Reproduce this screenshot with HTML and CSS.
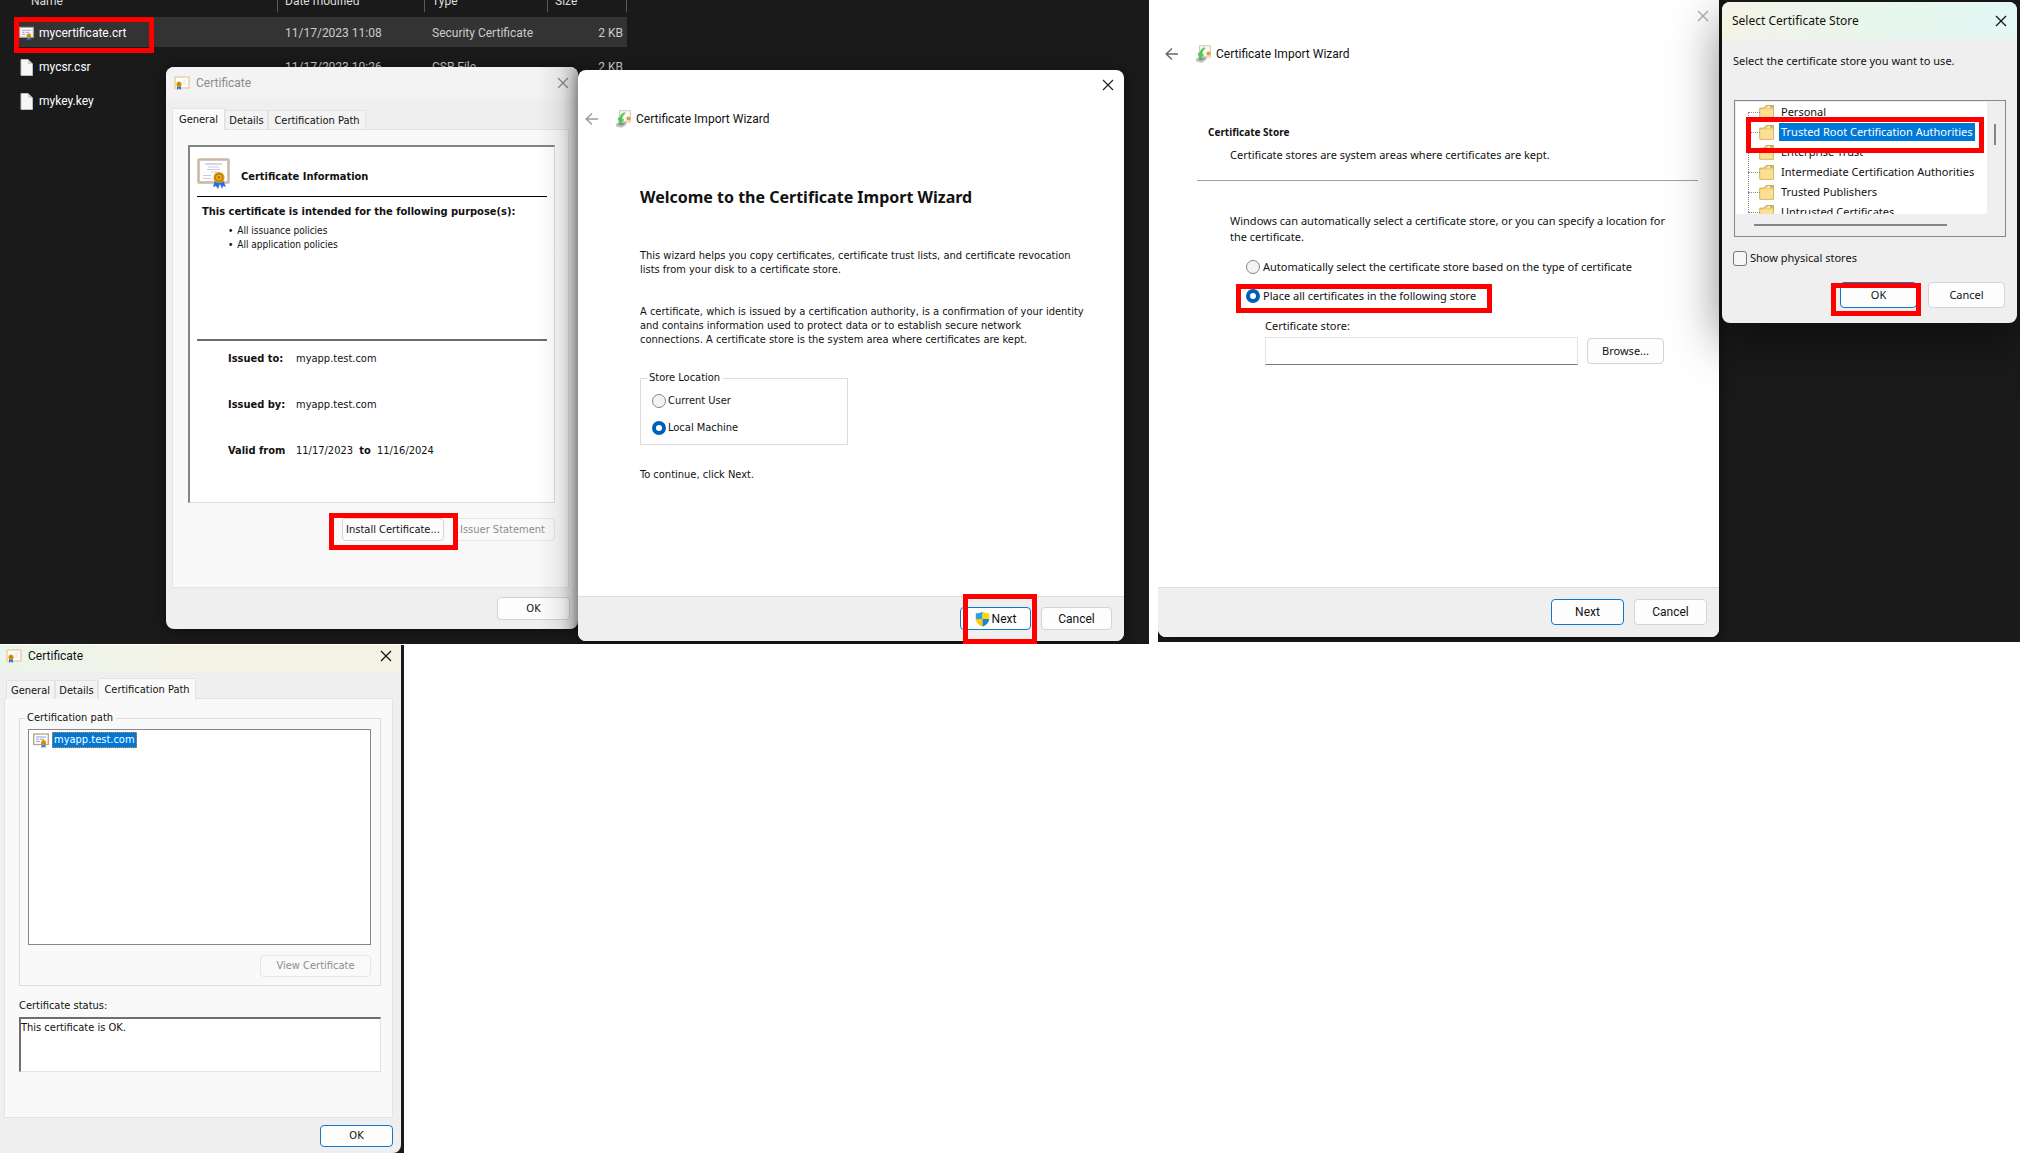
FILE: index.html
```html
<!DOCTYPE html>
<html lang="en">
<head>
<meta charset="utf-8">
<title>Install a self-signed certificate</title>
<link rel="stylesheet" href="styles.css">
</head>
<body>
<svg class="defs" aria-hidden="true">
  <symbol id="cert" viewBox="0 0 16 14">
    <rect x="1" y="1" width="14" height="11" fill="#fff" stroke="#ecd2a8" stroke-width="1.6"/>
    <path d="M8 4h5M8 6h4M9 8h4" stroke="#e3e3ee" stroke-width="1"/>
    <path d="M3 9v5l2-1.500 2 1.500V9z" fill="#2f74e8"/>
    <circle cx="5" cy="8.200" r="2.600" fill="#d99a10"/>
    <circle cx="5" cy="8" r="1.100" fill="#b87a00"/>
  </symbol>
  <symbol id="cert-list" viewBox="0 0 16 15">
    <rect x=".7" y="1" width="14.600" height="10.500" fill="#fff" stroke="#b5a187" stroke-width="1.300"/>
    <path d="M3 4h10M3 6.200h3M7 6.200h4M3 8.400h4" stroke="#8f9bd8" stroke-width="1"/>
    <path d="M8.500 10v5l2-1.300 2 1.300v-5z" fill="#2f74e8"/>
    <circle cx="10.500" cy="9.700" r="2.600" fill="#dc9c0c"/>
    <circle cx="10.500" cy="9.700" r="1" fill="#b87a00"/>
  </symbol>
  <symbol id="cert-big" viewBox="0 0 34 31">
    <rect x="1.500" y="1.500" width="30" height="23" rx="1" fill="#fff" stroke="#d6c8b4" stroke-width="3"/>
    <rect x="1.500" y="1.500" width="30" height="23" rx="1" fill="none" stroke="#b9a88f" stroke-width="1" stroke-dasharray="1 1"/>
    <path d="M8 6h17" stroke="#a9b0d8"/>
    <path d="M11 9h11M10 11.500h13M14 14h6M6 17.500h8M6 20.500h8" stroke="#ccd" stroke-width="1"/>
    <path d="M18 22l-2 7 3-1 2 3 2-5 2 5 1-3 3 1-3-7z" fill="#2a6ee6"/>
    <circle cx="22" cy="19.500" r="5.500" fill="#dc9a0a"/>
    <circle cx="22" cy="19.500" r="3.600" fill="#e9b22f" stroke="#a97300"/>
    <circle cx="22" cy="19.500" r="1.400" fill="#b87a00"/>
  </symbol>
  <symbol id="doc" viewBox="0 0 13 17">
    <path d="M1 .5h7l4.500 4.500v11.500H1z" fill="#f6f6f6" stroke="#bdbdbd"/>
    <path d="M8 .5V5h4.500z" fill="#cfcfcf"/>
  </symbol>
  <symbol id="import" viewBox="0 0 17 18">
    <rect x="4.500" y=".7" width="11" height="11" fill="#faf7f0" stroke="#d8cbb4"/>
    <path d="M11 8v6l2-1.500 2 1.500V8z" fill="#f0e6d0"/>
    <circle cx="13.500" cy="8.500" r="2" fill="#e0a02a"/>
    <path d="M.5 14.500L4 11.500h8.500l-1.500 3.500-4 2.700-5-.8z" fill="#c3c7c3"/>
    <path d="M2.500 14.300l3-1.500h5l-2 2.200-3 .8z" fill="#8f958f"/>
    <path d="M9.500 2.500C6.500 3.500 4.800 6 4.600 8.500L2.800 8l2 5.500L9 9.800l-2-.5C7 7 7.800 5 10 3.500z" fill="#44cf4e" stroke="#35b544" stroke-width=".4"/>
  </symbol>
  <symbol id="close" viewBox="0 0 12 12">
    <path d="M1 1l10 10M11 1L1 11" fill="none" stroke="currentColor" stroke-width="1.200"/>
  </symbol>
  <symbol id="back" viewBox="0 0 14 14">
    <path d="M13 7H1M7 1.500L1.200 7 7 12.500" fill="none" stroke="currentColor" stroke-width="1.400"/>
  </symbol>
  <symbol id="shield" viewBox="0 0 15 16">
    <path d="M7.500.5C5.500 2 3 2.300.8 2.300V8h6.700z" fill="#2ba0ea"/>
    <path d="M7.500.5C9.500 2 12 2.300 14.200 2.300V8H7.500z" fill="#ffd400"/>
    <path d="M.8 8c.3 3.500 3 6.300 6.700 7.700V8z" fill="#ffc800"/>
    <path d="M14.200 8c-.3 3.500-3 6.300-6.700 7.700V8z" fill="#1683d8"/>
  </symbol>
  <symbol id="folder" viewBox="0 0 16 16">
    <path d="M.8 4.200h4L7 1.500h7.500v13.700H.8z" fill="#edcf7c" stroke="#d2a944"/>
    <path d="M8.500 3h3" stroke="#fff" stroke-width="1.200"/>
    <path d="M11.500 3h1.800" stroke="#3b8ad8" stroke-width="1.200"/>
    <path d="M1.300 5.500h13v9.200h-13z" fill="#fbdf94"/>
  </symbol>
</svg>

<main class="board">
  <section class="desk desk-files">
    <table class="files">
      <colgroup><col class="c-name"><col class="c-date"><col class="c-type"><col class="c-size"></colgroup>
      <thead><tr><th>Name</th><th>Date modified</th><th>Type</th><th>Size</th></tr></thead>
      <tbody>
        <tr class="picked"><td><span class="file"><svg width="15" height="15"><use href="#cert-list"/></svg>mycertificate.crt</span></td><td>11/17/2023 11:08</td><td>Security Certificate</td><td>2 KB</td></tr>
        <tr><td><span class="file"><svg width="15" height="17"><use href="#doc"/></svg>mycsr.csr</span></td><td>11/17/2023 10:26</td><td>CSR File</td><td>2 KB</td></tr>
        <tr><td><span class="file"><svg width="15" height="17"><use href="#doc"/></svg>mykey.key</span></td><td></td><td></td><td></td></tr>
      </tbody>
    </table>

    <article class="win cert cert-general">
      <header class="bar"><svg width="16" height="14"><use href="#cert"/></svg><h2>Certificate</h2><button class="x" aria-label="Close"><svg width="12" height="12"><use href="#close"/></svg></button></header>
      <nav class="tabs"><button class="tab on">General</button><button class="tab">Details</button><button class="tab">Certification Path</button></nav>
      <div class="page">
        <div class="info">
          <div class="info-head"><svg width="34" height="31"><use href="#cert-big"/></svg><h3>Certificate Information</h3></div>
          <h4>This certificate is intended for the following purpose(s):</h4>
          <ul><li>All issuance policies</li><li>All application policies</li></ul>
          <dl>
            <div><dt>Issued to:</dt><dd>myapp.test.com</dd></div>
            <div><dt>Issued by:</dt><dd>myapp.test.com</dd></div>
            <div><dt>Valid from</dt><dd>11/17/2023 <b>to</b> 11/16/2024</dd></div>
          </dl>
        </div>
        <div class="actions"><button class="btn install">Install Certificate...</button><button class="btn issuer" disabled>Issuer Statement</button></div>
      </div>
      <footer><button class="btn">OK</button></footer>
    </article>

    <article class="win wizard wizard-welcome">
      <button class="x" aria-label="Close"><svg width="12" height="12"><use href="#close"/></svg></button>
      <header class="wtitle"><button class="back" aria-label="Back"><svg width="14" height="14"><use href="#back"/></svg></button><svg width="17" height="18"><use href="#import"/></svg><h2>Certificate Import Wizard</h2></header>
      <div class="wbody">
        <h1>Welcome to the Certificate Import Wizard</h1>
        <p>This wizard helps you copy certificates, certificate trust lists, and certificate revocation<br>lists from your disk to a certificate store.</p>
        <p>A certificate, which is issued by a certification authority, is a confirmation of your identity<br>and contains information used to protect data or to establish secure network<br>connections. A certificate store is the system area where certificates are kept.</p>
        <fieldset><legend>Store Location</legend>
          <label><input type="radio" name="loc">Current User</label>
          <label><input type="radio" name="loc" checked>Local Machine</label>
        </fieldset>
        <p>To continue, click Next.</p>
      </div>
      <footer><button class="btn main"><svg width="15" height="16"><use href="#shield"/></svg>Next</button><button class="btn">Cancel</button></footer>
    </article>
    <span class="mark mark-file"></span>
    <span class="mark mark-install"></span>
    <span class="mark mark-next"></span>
  </section>

  <section class="desk desk-store">
    <article class="win wizard wizard-store">
      <button class="x" aria-label="Close"><svg width="12" height="12"><use href="#close"/></svg></button>
      <header class="wtitle"><button class="back" aria-label="Back"><svg width="14" height="14"><use href="#back"/></svg></button><svg width="17" height="18"><use href="#import"/></svg><h2>Certificate Import Wizard</h2></header>
      <div class="wbody">
        <h3>Certificate Store</h3>
        <p class="desc">Certificate stores are system areas where certificates are kept.</p>
        <hr>
        <p class="lead">Windows can automatically select a certificate store, or you can specify a location for<br>the certificate.</p>
        <label class="opt"><input type="radio" name="store">Automatically select the certificate store based on the type of certificate</label>
        <label class="opt"><input type="radio" name="store" checked>Place all certificates in the following store</label>
        <div class="pick"><label for="store-name">Certificate store:</label>
          <div class="pick-row"><input id="store-name" type="text"><button class="btn">Browse...</button></div></div>
      </div>
      <footer><button class="btn main">Next</button><button class="btn">Cancel</button></footer>
    </article>

    <article class="win select">
      <header class="bar"><h2>Select Certificate Store</h2><button class="x" aria-label="Close"><svg width="12" height="12"><use href="#close"/></svg></button></header>
      <div class="sbody">
        <p>Select the certificate store you want to use.</p>
        <div class="tree">
          <ul>
            <li><svg width="16" height="16"><use href="#folder"/></svg><span>Personal</span></li>
            <li class="sel"><svg width="16" height="16"><use href="#folder"/></svg><span>Trusted Root Certification Authorities</span></li>
            <li><svg width="16" height="16"><use href="#folder"/></svg><span>Enterprise Trust</span></li>
            <li><svg width="16" height="16"><use href="#folder"/></svg><span>Intermediate Certification Authorities</span></li>
            <li><svg width="16" height="16"><use href="#folder"/></svg><span>Trusted Publishers</span></li>
            <li><svg width="16" height="16"><use href="#folder"/></svg><span>Untrusted Certificates</span></li>
          </ul>
          <i class="vthumb"></i><i class="hthumb"></i>
        </div>
        <label class="check"><input type="checkbox">Show physical stores</label>
        <div class="actions"><button class="btn main">OK</button><button class="btn">Cancel</button></div>
      </div>
    </article>
    <span class="mark mark-place"></span>
    <span class="mark mark-root"></span>
    <span class="mark mark-ok"></span>
  </section>

  <section class="desk desk-path">
    <article class="cert cert-path">
      <header class="bar"><svg width="16" height="14"><use href="#cert"/></svg><h2>Certificate</h2><button class="x" aria-label="Close"><svg width="12" height="12"><use href="#close"/></svg></button></header>
      <nav class="tabs"><button class="tab">General</button><button class="tab">Details</button><button class="tab on">Certification Path</button></nav>
      <div class="page">
        <fieldset><legend>Certification path</legend>
          <ul class="chain"><li><svg width="16" height="15"><use href="#cert-list"/></svg><span>myapp.test.com</span></li></ul>
          <div class="actions"><button class="btn" disabled>View Certificate</button></div>
        </fieldset>
        <label for="status">Certificate status:</label>
        <textarea id="status" readonly>This certificate is OK.</textarea>
      </div>
      <footer><button class="btn main">OK</button></footer>
    </article>
  </section>
</main>
</body>
</html>
```
FILE: styles.css
```css
* { box-sizing: border-box; }
body { margin: 0; background: #fff; color: #111; font: 11px/14px "Noto Sans", sans-serif; }
h1, h2, h3, h4, p, ul, dl, dd { margin: 0; padding: 0; font-size: inherit; font-weight: normal; }
ul { list-style: none; }
button, input, textarea { font: inherit; color: inherit; margin: 0; }
svg { flex: none; display: block; }
p { white-space: nowrap; }
.defs { position: absolute; width: 0; height: 0; }

/* the three desktops, two on the first row and one below */
.board { display: grid; grid-template-columns: 1149fr 862fr; column-gap: 9px; row-gap: 1px; padding-right: 4px; }
.desk { position: relative; overflow: hidden; background: #1a1a1a; }
.desk-files { min-height: 644px; }
.desk-store { min-height: 642px; align-self: start; }
.desk-path { width: 404px; padding-right: 3px; }

/* file list */
.files { width: 613px; margin: -14px 0 0 14px; table-layout: fixed; border-collapse: separate; border-spacing: 0 4px; color: #fff; font: 12px/16px Roboto, sans-serif; }
.c-name { width: 264px; }
.c-date { width: 147px; }
.c-type { width: 123px; }
.files th { height: 23px; padding: 0 0 0 7px; font-weight: normal; text-align: left; color: #ddd; border-right: 1px solid #5a5a5a; border-bottom: 2px solid #1a1a1a; }
.files th:first-child { padding-left: 17px; }
.files td { height: 30px; padding: 2px 0 0 7px; color: #ccc; }
.files td:first-child { padding-left: 5px; color: #fff; }
.files td:last-child { padding: 2px 4px 0 0; text-align: right; }
.picked { background: #333; }
.file { display: flex; align-items: center; gap: 5px; }

/* shared window parts */
.win { position: absolute; display: flex; flex-direction: column; overflow: hidden; border-radius: 8px; background: #efefef; box-shadow: 0 2px 14px rgba(0, 0, 0, .5); }
.bar { display: flex; align-items: center; font: 12px/16px Roboto, sans-serif; }
.bar h2 { flex: 1; }
.x, .back { display: block; padding: 0; border: 0; background: none; }
.btn { display: flex; align-items: center; justify-content: center; gap: 2px; width: 73px; height: 23px; padding: 0; border: 1px solid #d4d4d4; border-radius: 4px; background: #fdfdfd; white-space: nowrap; }
.btn.main { border: 1px solid #0f78cc; }
.btn:disabled { color: #8d8d8d; border-color: #e6e6e6; background: #fafafa; }
footer, .actions { display: flex; justify-content: flex-end; gap: 10px; }
input[type="radio"] { appearance: none; width: 14px; height: 14px; border: 1px solid #868686; border-radius: 50%; background: #f3f3f3; }
input[type="radio"]:checked { border: 4px solid #005fb8; background: #fff; }

/* certificate properties */
.cert { background: #efefef; font: 11px/14px "DejaVu Sans Condensed", "DejaVu Sans", sans-serif; }
.tabs { display: flex; align-items: flex-end; padding-left: 6px; }
.tab { height: 19px; padding: 2px 0 0; border: 1px solid #e3e3e3; border-bottom: 0; background: #f3f3f3; color: #111; text-align: center; white-space: nowrap; }
.tab.on { height: 22px; margin-bottom: -1px; padding-bottom: 2px; background: #f9f9f9; z-index: 1; }
.page { border: 1px solid #e3e3e3; background: #f9f9f9; }
.cert-general { left: 166px; top: 67px; width: 412px; height: 562px; background-color: #efefef; }
.cert-general::after { content: ""; position: absolute; inset: 0 0 0 auto; width: 40px; background: linear-gradient(to right, transparent, rgba(0, 0, 0, .06) 50%, rgba(0, 0, 0, .22)); }
.cert-general .bar { height: 32px; padding: 0 9px 0 8px; gap: 6px; background: #f3f3f3; color: #8c8c8c; }
.cert-general .tabs { height: 30px; }
.cert-general .tab:nth-child(1) { width: 53px; }
.cert-general .tab:nth-child(2) { width: 43px; }
.cert-general .tab:nth-child(3) { width: 98px; }
.cert-general .page { height: 459px; margin: 0 9px 0 6px; padding: 15px 13px 0 15px; }
.info { height: 358px; padding: 10px 7px 0; border: 1px solid #ddd; border-top: 2px solid #848484; border-left: 2px solid #848484; background: #fff; }
.info-head { display: flex; align-items: center; gap: 10px; height: 40px; padding-bottom: 7px; border-bottom: 1px solid #000; }
.info h3, .info h4, dt, dd b { font-weight: bold; }
.info-head h3 { padding-top: 8px; }
.info h4 { padding: 8px 0 5px 5px; }
.info ul { height: 117px; padding-left: 31px; border-bottom: 2px solid #6c6c6c; font-size: 10px; }
.info li::before { content: "•"; margin-right: 4px; }
.info dl { display: grid; gap: 32px; padding: 11px 0 0 31px; }
.info dl div { display: flex; }
dt { width: 68px; }
dd b { margin: 0 3px; }
.page .actions { padding-top: 15px; gap: 10px; }
.btn.install { width: 102px; }
.btn.issuer { width: 101px; padding-right: 4px; }
.cert-general footer { padding: 9px 8px 0 0; }

/* import wizard */
.wizard { background: #fff; }
.wizard .x { position: absolute; color: #222; }
.wtitle { display: flex; align-items: center; font: 12px/16px Roboto, sans-serif; }
.wtitle h2 { padding-left: 4px; }
.back { margin-right: 16px; }
.wizard .wbody { flex: 1; }
.wizard footer { border-top: 1px solid #ddd; background: #efefef; }
.wizard-welcome { left: 578px; top: 70px; width: 546px; height: 571px; font: 11px/14px "DejaVu Sans Condensed", "DejaVu Sans", sans-serif; }
.wizard-welcome .x { right: 10px; top: 9px; }
.wizard-welcome .wtitle { padding: 40px 0 0 7px; }
.wizard-welcome .back { color: #9a9a9a; }
.wizard-welcome .wbody { padding: 58px 0 0 62px; }
.wizard-welcome h1 { padding-bottom: 41px; font: bold 16px/22px "Noto Sans", sans-serif; }
.wizard-welcome p { padding-bottom: 28px; }
.wizard-welcome fieldset { display: flex; flex-direction: column; gap: 13px; width: 208px; height: 74px; margin: -4px 0 23px; padding: 9px 0 0 11px; border: 1px solid #dcdcdc; }
.wizard-welcome legend { margin-left: -5px; padding: 0 3px 0 2px; }
.wizard-welcome label { display: flex; align-items: center; gap: 2px; }
.wizard-welcome footer { height: 45px; padding: 10px 12px 0 0; font: 12px/16px Roboto, sans-serif; }
.wizard-welcome .btn { width: 71px; }

.wizard-store { left: 0; top: -10px; width: 561px; height: 647px; }
.wizard-store .x { right: 10px; top: 20px; color: #aaa; }
.wizard-store .wtitle { padding: 55px 0 0 7px; }
.wizard-store .back { color: #666; }
.wizard-store .wbody { padding: 61px 0 0; line-height: 16px; }
.wizard-store h3 { padding-left: 50px; font-size: 10px; font-weight: bold; }
.desc { padding: 7px 0 0 72px; }
.wizard-store hr { height: 1px; margin: 17px 21px 0 39px; border: 0; background: #a0a0a0; }
.lead { padding: 32px 0 14px 72px; }
.opt { display: flex; align-items: center; gap: 3px; height: 16px; margin: 0 0 13px 88px; }
.pick { padding: 1px 0 0 107px; }
.pick-row { display: flex; align-items: center; gap: 9px; padding-top: 3px; }
.pick input { width: 313px; height: 28px; border: 1px solid #e3e3e3; border-bottom: 1px solid #777; background: #fff; }
.pick .btn { width: 77px; height: 26px; }
.wizard-store footer { height: 50px; padding: 11px 12px 0 0; font: 12px/16px Roboto, sans-serif; }
.wizard-store .btn { height: 26px; }

/* store picker */
.select { left: 564px; top: 2px; width: 295px; height: 321px; box-shadow: 0 18px 50px rgba(0, 0, 0, .5); }
.select .bar { height: 37px; padding: 0 10px; background: linear-gradient(to right, #f4f3e6, #e8f6ec 50%, #e3f7f4); font: 12px/16px "Noto Sans", sans-serif; }
.sbody { padding: 15px 12px 0 12px; }
.sbody p, .sbody .check { margin-left: -1px; }
.tree { position: relative; height: 137px; margin: 32px -1px 13px 0; padding: 1px; border: 1px solid #828790; background: #efefef; }
.tree ul { width: 251px; height: 112px; overflow: hidden; border-radius: 0 0 4px; background: #fff; }
.tree li { position: relative; display: flex; align-items: center; gap: 4px; height: 20px; padding-left: 23px; white-space: nowrap; }
.tree li span { padding: 2px; }
.tree li::before { content: ""; position: absolute; left: 12px; top: 10px; width: 12px; border-top: 1px dotted #888; }
.tree li:not(:first-child)::after { content: ""; position: absolute; left: 12px; top: -10px; height: 20px; border-left: 1px dotted #888; }
.tree .sel span { background: #0078d7; color: #fff; }
.vthumb { position: absolute; right: 9px; top: 23px; width: 2px; height: 21px; background: #858585; }
.hthumb { position: absolute; left: 19px; bottom: 10px; width: 193px; height: 2px; background: #858585; }
.check { display: flex; align-items: center; gap: 3px; height: 16px; }
.check input { appearance: none; width: 14px; height: 15px; border: 1px solid #777; border-radius: 3px; background: #f6f6f6; }
.select .actions { padding-top: 16px; gap: 11px; }
.select .btn { width: 77px; height: 26px; }

/* certification path */
.cert-path { border-radius: 0 0 8px; }
.cert-path .bar { height: 26px; padding: 0 9px 4px 6px; gap: 6px; background: linear-gradient(to right, #ecf5ea, #f5f3e6 50%); }
.cert-path .tabs { height: 28px; }
.cert-path .tab:nth-child(1) { width: 49px; }
.cert-path .tab:nth-child(2) { width: 43px; }
.cert-path .tab:nth-child(3) { width: 98px; }
.cert-path .page { height: 420px; margin: -1px 8px 0 4px; padding: 12px 11px 0 14px; }
.cert-path fieldset { height: 275px; margin: 0 0 13px; padding: 4px 9px 0 8px; border: 1px solid #dcdcdc; }
.cert-path legend { margin-left: -3px; padding: 0 3px 0 2px; }
.chain { height: 216px; padding: 2px 4px; border: 1px solid #828790; background: #fff; }
.chain li { display: flex; align-items: center; gap: 3px; }
.chain span { padding: 0 1px; border: 1px dotted #e08a2a; background: #0078d7; color: #fff; }
.cert-path .page .actions { padding-top: 10px; }
.cert-path .page .btn { width: 111px; height: 22px; }
.cert-path .page label { display: block; }
textarea { display: block; width: 100%; height: 55px; margin-top: 4px; padding: 2px 0 0; resize: none; border: 1px solid #e3e3e3; border-top: 2px solid #6e6e6e; border-left: 2px solid #6e6e6e; border-radius: 0; background: #fff; outline: 0; }
.cert-path footer { height: 35px; padding: 7px 8px 0 0; }
.cert-path footer .btn { height: 22px; }

/* red call-outs over the steps to click */
.mark { position: absolute; border: 5px solid #f00; pointer-events: none; }
.mark-file { left: 14px; top: 17px; width: 140px; height: 36px; }
.mark-install { left: 329px; top: 513px; width: 129px; height: 37px; }
.mark-next { left: 963px; top: 594px; width: 74px; height: 50px; }
.mark-place { left: 78px; top: 284px; width: 256px; height: 29px; }
.mark-root { left: 588px; top: 117px; width: 238px; height: 36px; }
.mark-ok { left: 673px; top: 283px; width: 90px; height: 33px; }
```
